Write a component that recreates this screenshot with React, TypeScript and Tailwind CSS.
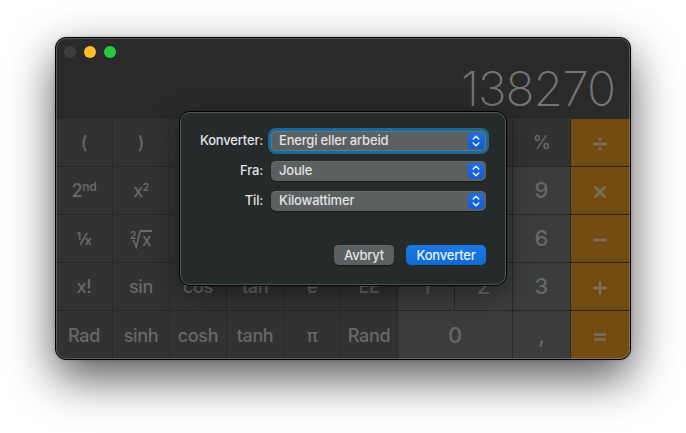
import React from "react";

type Kind = "fn" | "num" | "op";
type Key = { id: string; kind: Kind; label?: React.ReactNode; wide?: boolean };

const fn = (id: string, label: React.ReactNode = id): Key => ({ id, kind: "fn", label });
const num = (id: string, wide = false): Key => ({ id, kind: "num", label: id, wide });
const covered = (id: string, kind: Kind = "fn"): Key => ({ id, kind });

function Op({ d }: { d: string }) {
  return (
    <svg width="16" height="16" viewBox="0 0 16 16" fill="none" stroke="#7d705e" strokeWidth="2.4" className="-ml-[2px] mt-[3px]">
      <path d={d} />
    </svg>
  );
}
const op = (id: string, d: string): Key => ({ id, kind: "op", label: <Op d={d} /> });

const second = (
  <span className="flex items-start leading-none">
    2<span className="-mt-px text-[12px] font-semibold leading-[12px]">nd</span>
  </span>
);
const square = (
  <span className="flex items-start leading-none">
    x<span className="text-[10px] font-bold leading-[10px]">2</span>
  </span>
);
const reciprocal = (
  <span className="flex items-center leading-none">
    <span className="-mt-[6px] text-[10px] font-bold">1</span>
    <svg width="9" height="14" viewBox="0 0 9 14" className="-ml-[2px] -mr-[3px]" fill="none" stroke="currentColor" strokeWidth="1.5">
      <path d="M1 13 8 1" />
    </svg>
    <span className="mt-[5px] text-[12px] font-bold">x</span>
  </span>
);
const root = (
  <span className="mt-px flex items-center leading-none">
    <span className="-mr-[4px] -mt-[9px] text-[10px] font-bold">2</span>
    <svg width="9" height="20" viewBox="0 0 9 20" fill="none" stroke="currentColor" strokeWidth="1.6">
      <path d="M0.5 12.5 2 12 4.2 18 8.3 2H9" />
    </svg>
    <span className="-mt-px h-[18px] border-t-2 border-current px-px text-[17px] leading-[17px]">x</span>
  </span>
);

const keys: Key[] = [
  fn("("), fn(")"), covered("mc"), covered("m+"), covered("m-"), covered("mr"), covered("clear"), covered("sign"), fn("%"),
  op("divide", "M1 8H15M8 2V5M8 11V14"),
  fn("2nd", second), fn("x2", square), covered("x3"), covered("xy"), covered("ex"), covered("10x"), covered("7", "num"), covered("8", "num"), num("9"),
  op("times", "M2.7 2.7 13.3 13.3M13.3 2.7 2.7 13.3"),
  fn("1/x", reciprocal), fn("root", root), covered("3x"), covered("yx"), covered("ln"), covered("log"), covered("4", "num"), covered("5", "num"), num("6"),
  op("minus", "M1.5 8H14.5"),
  fn("x!"), fn("sin"), fn("cos"), fn("tan"), fn("e"), fn("EE"), num("1"), num("2"), num("3"),
  op("plus", "M1.5 8H14.5M8 1.5V14.5"),
  fn("Rad"), fn("sinh"), fn("cosh"), fn("tanh"), fn("π"), fn("Rand"), num("0", true), num(","),
  op("equals", "M2 5.5H14M2 10.5H14"),
];

const tone: Record<Kind, string> = {
  fn: "bg-[#323232] text-[18px] font-medium tracking-[-0.35px]",
  num: "bg-[#3b3d3c] text-[22px] font-medium",
  op: "bg-[#734c13]",
};

function Select({ label, value, focused }: { label: string; value: string; focused?: boolean }) {
  return (
    <div className="flex h-5 items-center">
      <span className="w-[82px] text-right">{label}</span>
      <div
        className={
          "ml-2 flex h-5 w-[215px] items-center justify-between rounded-[5px] bg-[#5c6061] pl-2 pr-[2px] " +
          (focused
            ? "shadow-[inset_0_0_0_1px_#3d82ac,0_0_0_3px_#206794]"
            : "shadow-[inset_0_1px_0_#686c6d,0_1px_1px_#151919]")
        }
      >
        <span>{value}</span>
        <span className="flex size-4 items-center justify-center rounded-[4px] bg-linear-to-b from-[#1b70ed] to-[#125bd0]">
          <svg width="8" height="12" viewBox="0 0 8 12" fill="none" stroke="#e9efff" strokeWidth="1.5" strokeLinecap="round" strokeLinejoin="round">
            <path d="M1.2 4 4 1.2 6.8 4M1.2 8 4 10.8 6.8 8" />
          </svg>
        </span>
      </div>
    </div>
  );
}

export default function App() {
  return (
    <main className="h-[433px] w-[686px] overflow-hidden bg-white pl-[55px] pt-[37px] font-['Inter',sans-serif]">
      <div className="relative h-[323px] w-[576px] rounded-[11px] border border-black bg-[#2a2a2a] shadow-[0_18px_46px_rgba(0,0,0,0.66),0_0_3px_rgba(0,0,0,0.2)]">
        <div className="flex h-full flex-col overflow-hidden rounded-[10px]">
          <header className="h-[81px] shrink-0">
            <div className="flex gap-2 pl-2 pt-2">
              <i className="size-3 rounded-full bg-[#3e3e3e]" />
              <i className="size-3 rounded-full bg-[#febc2e]" />
              <i className="size-3 rounded-full bg-[#28c840]" />
            </div>
            <div className="pr-[15px] pt-[6px] text-right text-[48px] font-extralight leading-[50px] tracking-[-1px] text-[#757575]">138270</div>
          </header>
          <div className="grid flex-1 grid-cols-[56px_56px_56px_56px_56px_56px_56px_57px_57px_59px] grid-rows-[47px_47px_47px_47px_48px] gap-px bg-[#282828] text-[#686868]">
            {keys.map((k) => (
              <div key={k.id} className={"flex items-center justify-center " + tone[k.kind] + (k.wide ? " col-span-2" : "")}>
                {k.label}
              </div>
            ))}
          </div>
        </div>
        <div className="pointer-events-none absolute inset-0 rounded-[10px] border border-white/20" />
        <div className="absolute inset-0 overflow-hidden rounded-[10px]">
          <section className="absolute left-[123px] top-[73px] h-[175px] w-[328px] rounded-[11px] border border-black bg-[#252a2b] text-[13px] font-medium tracking-[-0.18px] text-[#e2e3e3] shadow-[0_7px_24px_rgba(0,0,0,0.42)]">
            <div className="h-full rounded-[10px] border border-[#515556] pt-[18px]">
              <div className="flex flex-col gap-[10px]">
                <Select label="Konverter:" value="Energi eller arbeid" focused />
                <Select label="Fra:" value="Joule" />
                <Select label="Til:" value="Kilowattimer" />
              </div>
              <div className="mt-[34px] flex justify-end gap-3 pr-[19px]">
                <button className="h-5 w-[60px] rounded-[5px] bg-[#5c6061] leading-5 tracking-[-0.22px] shadow-[inset_0_1px_0_#686c6d,0_1px_1px_#151919]">Avbryt</button>
                <button className="h-5 w-20 rounded-[5px] bg-linear-to-b from-[#1b7ae6] to-[#126bd2] leading-5 tracking-[-0.22px] text-[#e7f1fc]">Konverter</button>
              </div>
            </div>
          </section>
        </div>
      </div>
    </main>
  );
}
